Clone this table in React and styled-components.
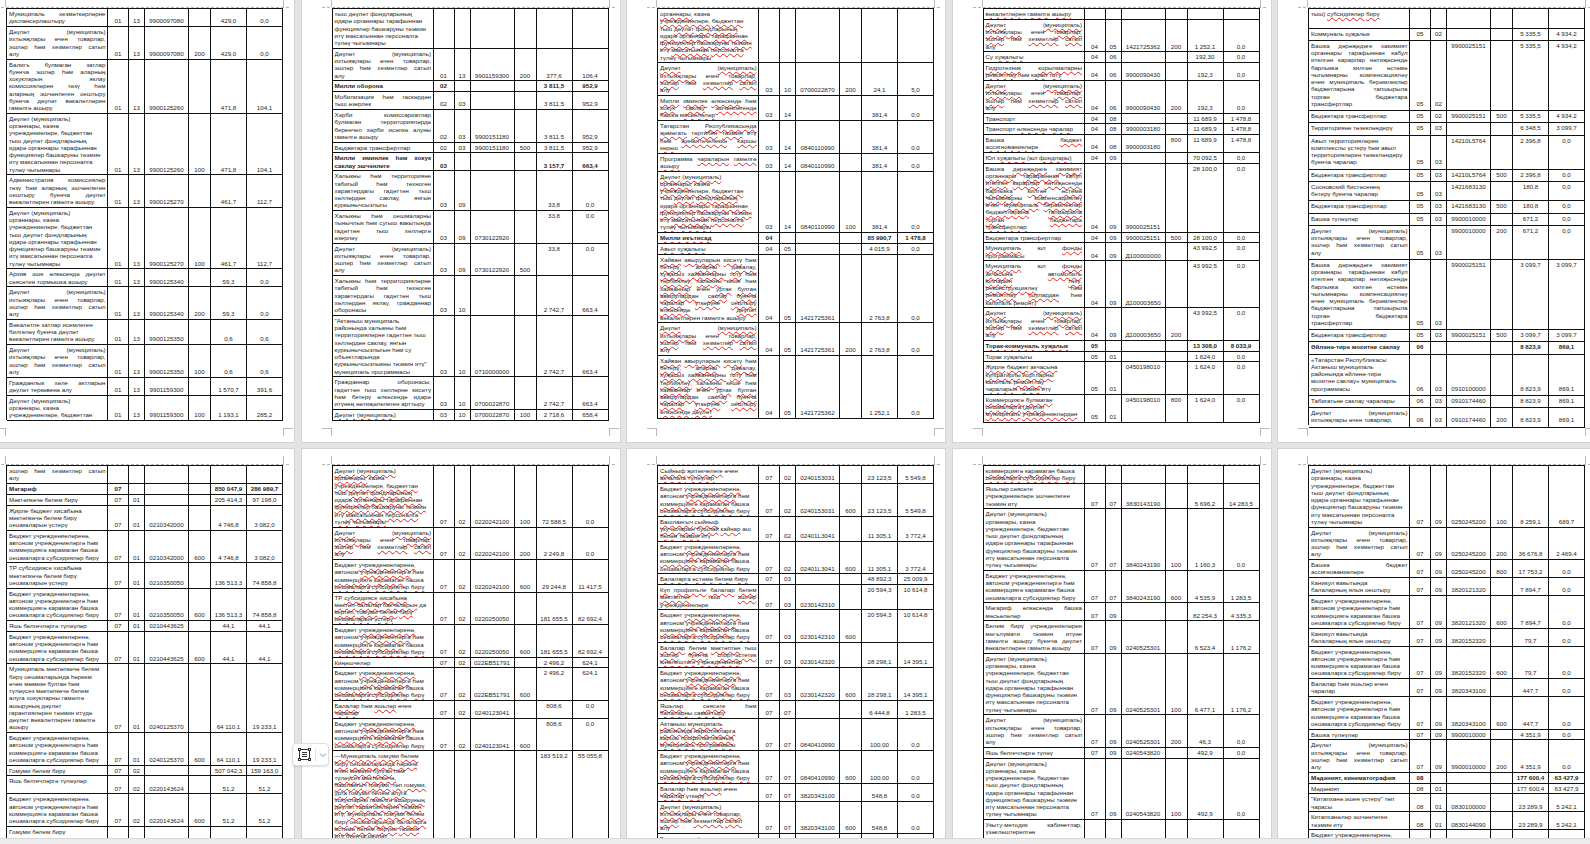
import React from 'react';
import styled, { createGlobalStyle } from 'styled-components';

const GlobalStyle = createGlobalStyle`
  html, body {
    margin: 0;
    padding: 0;
    overflow: hidden;
    background: #e4e4e4;
  }
  body {
    font-family: "Liberation Sans", Arial, sans-serif;
  }
`;

const Screen = styled.div`
  position: relative;
  width: 1590px;
  height: 844px;
  display: flex;
  flex-direction: column;
  overflow: hidden;
  background: #e4e4e4;
`;

const Viewport = styled.div`
  flex: 1;
  min-height: 0;
  overflow: hidden;
`;

const ScrollTrack = styled.div`
  flex: none;
  height: 5px;
  background: #ededed;
  border-top: 1px solid #d6d6d6;
`;

const Sheet = styled.div`
  display: grid;
  grid-template-columns: repeat(5, 318px);
  grid-auto-rows: 450px;
  column-gap: 7.5px;
  row-gap: 7px;
  width: max-content;
  margin: -8px 0 0 -24px;
`;

const Page = styled.div`
  box-sizing: border-box;
  background: #fff;
  box-shadow: 0 0 0 1px #d3d3d3;
  padding: 16px 0 0 30px;
`;

const Body = styled.div`
  position: relative;
  width: 277px;
  height: 420px;
`;

const HeaderRule = styled.div`
  position: absolute;
  left: -10px;
  right: -6px;
  top: -1px;
  border-top: 1px dashed #b5b5b5;
`;

const Corner = styled.span`
  position: absolute;
  width: 10px;
  height: 8px;
  box-sizing: border-box;
  ${({ $pos }) => {
    const c = '1px solid #b9b9b9';
    if ($pos === 'tl') return `top: -9px; left: -10px; border-right: ${c};`;
    if ($pos === 'tr') return `top: -9px; right: -10px; border-left: ${c};`;
    if ($pos === 'bl') return `top: 420px; left: -10px; border-top: ${c}; border-right: ${c};`;
    return `top: 420px; right: -10px; border-top: ${c}; border-left: ${c};`;
  }}
`;

const Table = styled.div`
  display: flex;
  flex-direction: column;
  box-sizing: border-box;
  width: 277px;
  height: ${p => (p.$h ? `${p.$h}px` : 'auto')};
  border-top: 1px solid #111;
  border-left: 1px solid #111;
  font-size: 6.2px;
  line-height: 7.25px;
  color: #1e1e1e;
`;

const Row = styled.div`
  display: grid;
  grid-template-columns: 101px 21px 16px 44px 22px 36px 36px;
  flex: ${p => (p.$fill ? '1 0 auto' : '0 0 auto')};
  font-weight: ${p => (p.$bold ? 700 : 400)};
`;

const DescCell = styled.div`
  box-sizing: border-box;
  min-width: 0;
  overflow: hidden;
  border-right: 1px solid #111;
  border-bottom: 1px solid #111;
  padding: 1px 1.5px ${p => 1.5 + p.$pad}px 2px;
`;

const Cell = styled.div`
  box-sizing: border-box;
  min-width: 0;
  overflow: hidden;
  white-space: nowrap;
  display: flex;
  justify-content: center;
  align-items: ${p => (p.$top ? 'flex-start' : 'flex-end')};
  border-right: 1px solid #111;
  border-bottom: 1px solid #111;
  padding: 1px 0 ${p => 1.5 + p.$pad}px;
`;

const Line = styled.div`
  height: 7.25px;
  white-space: nowrap;
  text-align: ${p => (p.$just ? 'justify' : 'left')};
  text-align-last: ${p => (p.$just ? 'justify' : 'auto')};
`;

const Squiggle = styled.span`
  text-decoration-line: underline;
  text-decoration-style: wavy;
  text-decoration-color: #e3241d;
  text-decoration-thickness: 1px;
  text-underline-offset: 1px;
  text-decoration-skip-ink: none;
`;

const PasteChip = styled.div`
  position: absolute;
  left: 292px;
  top: 743px;
  width: 37px;
  height: 23px;
  box-sizing: border-box;
  display: flex;
  align-items: center;
  gap: 3px;
  padding-left: 4px;
  background: #fff;
  border: 1px solid #dedede;
  border-radius: 4px;
  box-shadow: 0 1px 2px rgba(0, 0, 0, 0.12);
`;

const ChipDivider = styled.span`
  width: 1px;
  height: 13px;
  background: #e2e2e2;
`;

const A8 = 'Дәүләт (муниципаль)/органнары, казна/учреждениеләре, бюджеттан/тыш дәүләт фондларының/идарә органнары тарафыннан/функцияләр башкаруны тәэмин/итү максатыннан персоналга/түләү чыгымнары';
const B4 = 'Дәүләт (муниципаль)/ихтыяҗлары өчен товарлар,/эшләр һәм хезмәтләр сатып/алу';
const C4 = 'Бюджет учреждениеләренә,/автоном учреждениеләргә һәм/коммерциягә карамаган башка/оешмаларга субсидияләр бирү';
const TR = 'Бюджетара трансфертлар';
const OTHER9 = 'Башка дәрәҗәдәге хакимият/органнары тарафыннан кабул/ителгән карарлар нәтиҗәсендә/барлыкка килгән өстәмә/чыгымнарны компенсацияләү/өчен муниципаль берәмлекләр/бюджетларына тапшырыла/торган бюджетара/трансфертлар';
const ANIMAL = 'Хайван авыруларын кисәтү һәм/бетерү, аларны дәвалау,/хуҗасыз хайваннарны тоту һәм/тәрбияләү, халыкны кеше һәм/хайваннар өчен уртак булган/авырулардан саклау буенча/чаралар үткәрүне оештыру/өлкәсендә дәүләт';

// flags: b bold, j justified, s spell squiggle, t sums on top, k code on top, y type on top
const pages = [
  {
    h: 412,
    rows: [
      ['j', 'Муниципаль хезмәткәрләрне/диспансерлаштыру', '01', '13', '9900097080', '', '429,0', '0,0'],
      ['j', B4, '01', '13', '9900097080', '200', '429,0', '0,0'],
      ['j', 'Балигъ булмаган затлар/буенча эшләр һәм аларның/хокукларын яклау/комиссияләрен төзү һәм/аларның эшчәнлеген оештыру/буенча дәүләт вәкаләтләрен/гамәлгә ашыру', '01', '13', '9900125260', '', '471,8', '104,1'],
      ['', A8, '01', '13', '9900125260', '100', '471,8', '104,1'],
      ['j', 'Административ комиссияләр/төзү һәм аларның эшчәнлеген/оештыру буенча дәүләт/вәкаләтләрен гамәлгә ашыру', '01', '13', '9900125270', '', '461,7', '112,7'],
      ['', A8, '01', '13', '9900125270', '100', '461,7', '112,7'],
      ['j', 'Архив эше өлкәсендә дәүләт/сәясәтен тормышка ашыру', '01', '13', '9900125340', '', '59,3', '0,0'],
      ['j', B4, '01', '13', '9900125340', '200', '59,3', '0,0'],
      ['', 'Вәкаләтле затлар исемлеген/билгеләү буенча дәүләт/вәкаләтләрен гамәлгә ашыру', '01', '13', '9900125350', '', '0,6', '0,6'],
      ['j', B4, '01', '13', '9900125350', '100', '0,6', '0,6'],
      ['j', 'Гражданлык хәле актларын/дәүләт теркәвенә алу', '01', '13', '9901159300', '', '1 570,7', '391,6'],
      ['', 'Дәүләт (муниципаль)/органнары, казна/учреждениеләре, бюджеттан', '01', '13', '9901159300', '100', '1 193,1', '285,2'],
    ],
  },
  {
    h: 413,
    rows: [
      ['', 'тыш дәүләт фондларының/идарә органнары тарафыннан/функцияләр башкаруны тәэмин/итү максатыннан персоналга/түләү чыгымнары', '', '', '', '', '', ''],
      ['j', B4, '01', '13', '9901159300', '200', '377,6', '106,4'],
      ['b', 'Милли оборона', '02', '', '', '', '3 811,5', '952,9'],
      ['j', 'Мобилизация һәм гаскәрдән/тыш әзерлек', '02', '03', '', '', '3 811,5', '952,9'],
      ['j', 'Хәрби комиссариатлар/булмаган территорияләрдә/беренчел хәрби исәпкә алуны/гамәлгә ашыру', '02', '03', '9900151180', '', '3 811,5', '952,9'],
      ['', TR, '02', '03', '9900151180', '500', '3 811,5', '952,9'],
      ['bj', 'Милли иминлек һәм хокук/саклау эшчәнлеге', '03', '', '', '', '3 157,7', '663,4'],
      ['j', 'Халыкны һәм территорияне/табигый һәм техноген/характердагы гадәттән тыш/хәлләрдән саклау, янгын/куркынычсызлыгы', '03', '09', '', '', '33,8', '0,0'],
      ['jt', 'Халыкны һәм оешмаларны/тынычлык һәм сугыш вакытында/гадәттән тыш хәлләргә/әзерләү', '03', '09', '0730122920', '', '33,8', '0,0'],
      ['jt', B4, '03', '09', '0730122920', '500', '33,8', '0,0'],
      ['j', 'Халыкны һәм территорияләрне/табигый һәм техноген/характердагы гадәттән тыш/хәлләрдән яклау, гражданнар/оборонасы', '03', '10', '', '', '2 742,7', '663,4'],
      ['', '"Актаныш муниципаль/районында халыкны һәм/территорияләрне гадәттән тыш/хәлләрдән саклау, янгын/куркынычсызлыгын һәм су/объектларында/куркынычсызлыкны тәэмин итү"/муниципаль программасы', '03', '10', '0710000000', '', '2 742,7', '663,4'],
      ['j', 'Гражданнар оборонасы,/гадәттән тыш хәлләрне кисәтү/һәм бетерү өлкәсендә идарә/итүнең нәтиҗәлелеген арттыру', '03', '10', '0700022870', '', '2 742,7', '663,4'],
      ['s', 'Дәүләт (муниципаль)', '03', '10', '0700022870', '100', '2 718,6', '658,4'],
    ],
  },
  {
    h: 411,
    rows: [
      ['s', 'органнары, казна/учреждениеләре, бюджеттан/тыш дәүләт фондларының/идарә органнары тарафыннан/функцияләр башкаруны тәэмин/итү максатыннан персоналга/түләү чыгымнары', '', '', '', '', '', ''],
      ['js', B4, '03', '10', '0700022870', '200', '24,1', '5,0'],
      ['js', 'Милли иминлек өлкәсендә һәм/хокук саклау эшчәнлегендә/башка мәсьәләләр', '03', '14', '', '', '381,4', '0,0'],
      ['js', 'Татарстан Республикасында/җәмәгать тәртибен тәэмин итү/һәм җинаятьчелеккә каршы/көрәш', '03', '14', '0840110990', '', '381,4', '0,0'],
      ['js', 'Программа чараларын гамәлгә/ашыру', '03', '14', '0840110990', '', '381,4', '0,0'],
      ['s', A8, '03', '14', '0840110990', '100', '381,4', '0,0'],
      ['bs', 'Милли икътисад', '04', '', '', '', '85 990,7', '1 478,8'],
      ['s', 'Авыл хуҗалыгы', '04', '05', '', '', '4 015,9', '0,0'],
      ['js', ANIMAL + '/вәкаләтләрен гамәлгә ашыру', '04', '05', '1421725361', '', '2 763,8', '0,0'],
      ['js', B4, '04', '05', '1421725361', '200', '2 763,8', '0,0'],
      ['js', ANIMAL, '04', '05', '1421725362', '', '1 252,1', '0,0'],
    ],
  },
  {
    h: 415,
    rows: [
      ['s', 'вәкаләтләрен гамәлгә ашыру', '', '', '', '', '', ''],
      ['js', B4, '04', '05', '1421725362', '200', '1 252,1', '0,0'],
      ['s', 'Су хуҗалыгы', '04', '06', '', '', '192,30', '0,0'],
      ['js', 'Гидротехник корылмаларны/ремонтлау һәм карап тоту', '04', '06', '9900090430', '', '192,3', '0,0'],
      ['js', B4, '04', '06', '9900090430', '200', '192,3', '0,0'],
      ['', 'Транспорт', '04', '08', '', '', '11 689,9', '1 478,8'],
      ['s', 'Транспорт өлкәсендә чаралар', '04', '08', '9900003180', '', '11 689,9', '1 478,8'],
      ['jsyt', 'Башка бюджет/ассигнованиеләре', '04', '08', '9900003180', '800', '11 689,9', '1 478,8'],
      ['s', 'Юл хуҗалыгы (юл фондлары)', '04', '09', '', '', '70 092,5', '0,0'],
      ['jst', OTHER9, '04', '09', '9900025151', '', '28 100,0', '0,0'],
      ['s', TR, '04', '09', '9900025151', '500', '28 100,0', '0,0'],
      ['jst', 'Муниципаль юл фонды/программасы', '04', '09', 'Д100000000', '', '43 992,5', '0,0'],
      ['jst', 'Муниципаль юл фонды/акчасына автомобиль/юлларын төзү,/реконструкцияләү һәм/ремонтлау (шулардан һәм/капиталь ремонт)', '04', '09', 'Д100003650', '', '43 992,5', '0,0'],
      ['jst', B4, '04', '09', 'Д100003650', '200', '43 992,5', '0,0'],
      ['bs', 'Торак-коммуналь хуҗалык', '05', '', '', '', '13 308,0', '8 033,9'],
      ['s', 'Торак хуҗалыгы', '05', '01', '', '', '1 624,0', '0,0'],
      ['skt', 'Җирле бюджет акчасына/күпфатирлы йортларны/капиталь ремонтлау/чараларын тәэмин итү', '05', '01', '0450198010', '', '1 624,0', '0,0'],
      ['skyt', 'Коммерциягә булмаган/оешмаларга (дәүләт/муниципаль учреждениеләрдән', '05', '01', '0450198010', '800', '1 624,0', '0,0'],
    ],
  },
  {
    h: 417,
    pad: 1.5,
    rows: [
      ['s', 'тыш) субсидияләр бирү/', '', '', '', '', '', ''],
      ['t', 'Коммуналь хуҗалык', '05', '02', '', '', '5 335,5', '4 934,2'],
      ['jkt', OTHER9, '05', '02', '9900025151', '', '5 335,5', '4 934,2'],
      ['kyt', TR, '05', '02', '9900025151', '500', '5 335,5', '4 934,2'],
      ['t', 'Территорияне төзекләндерү', '05', '03', '', '', '6 348,5', '3 099,7'],
      ['kt', 'Авыл территорияләрен/комплекслы үстерү һәм авыл/территорияләрен төзекләндерү/буенча чаралар', '05', '03', '14210L5764', '', '2 396,8', '0,0'],
      ['kyt', TR, '05', '03', '14210L5764', '500', '2 396,8', '0,0'],
      ['kt', 'Сосновский бистәсенең/бетерү буенча чаралар', '05', '03', '1421683130', '', '180,8', '0,0'],
      ['kyt', TR, '05', '03', '1421683130', '500', '180,8', '0,0'],
      ['kyt', 'Башка түләүләр', '05', '03', '9900010000', '', '671,2', '0,0'],
      ['jkyt', B4, '05', '03', '9900010000', '200', '671,2', '0,0'],
      ['jkt', OTHER9, '05', '03', '9900025151', '', '3 099,7', '3 099,7'],
      ['kyt', TR, '05', '03', '9900025151', '500', '3 099,7', '3 099,7'],
      ['b', 'Әйләнә-тирә мохитне саклау', '06', '', '', '', '8 823,9', '869,1'],
      ['', '«Татарстан Республикасы/Актаныш муниципаль/районында әйләнә-тирә/мохитне саклау» муниципаль/программасы', '06', '03', '0910100000', '', '8 823,9', '869,1'],
      ['', 'Табигатьне саклау чаралары', '06', '03', '0910174460', '', '8 823,9', '869,1'],
      ['j', 'Дәүләт (муниципаль)/ихтыяҗлары өчен товарлар,', '06', '03', '0910174460', '200', '8 823,9', '869,1'],
    ],
  },
  {
    rows: [
      ['j', 'эшләр һәм хезмәтләр сатып/алу', '', '', '', '', '', ''],
      ['b', 'Мәгариф', '07', '', '', '', '850 047,9', '286 989,7'],
      ['', 'Мәктәпкәчә белем бирү', '07', '01', '', '', '205 414,3', '97 198,0'],
      ['', 'Җирле бюджет хисабына/мәктәпкәчә белем бирү/оешмаларын үстерү', '07', '01', '0210342000', '', '4 746,8', '3 082,0'],
      ['', C4, '07', '01', '0210342000', '600', '4 746,8', '3 082,0'],
      ['', 'ТР субсидиясе хисабына/мәктәпкәчә белем бирү/оешмаларын үстерү', '07', '01', '0210350050', '', '136 513,3', '74 858,8'],
      ['', C4, '07', '01', '0210350050', '600', '136 513,3', '74 858,8'],
      ['', 'Яшь белгечләргә түләүләр', '07', '01', '0210443625', '', '44,1', '44,1'],
      ['', C4, '07', '01', '0210443625', '600', '44,1', '44,1'],
      ['', 'Муниципаль мәктәпкәчә белем/бирү оешмаларында һәркем/өчен мөмкин булган һәм/түләүсез мәктәпкәчә белем/алуга хокукларны гамәлгә/ашыруның дәүләт/гарантияләрен тәэмин итүдә/дәүләт вәкаләтләрен гамәлгә/ашыру', '07', '01', '0240125370', '', '64 110,1', '19 233,1'],
      ['', C4, '07', '01', '0240125370', '600', '64 110,1', '19 233,1'],
      ['', 'Гомуми белем бирү', '07', '02', '', '', '507 042,3', '159 163,0'],
      ['', 'Яшь белгечләргә түләүләр/', '07', '02', '0220143624', '', '51,2', '51,2'],
      ['', C4, '07', '02', '0220143624', '600', '51,2', '51,2'],
      ['', 'Гомуми белем бирү/оешмаларын, шул исәптән/мәктәп-балалар бакчаларын/үстерү', '07', '02', '0220242100', '', '283 744,2', '76 366,5'],
    ],
  },
  {
    rows: [
      ['s', A8, '07', '02', '0220242100', '100', '72 588,5', '0,0'],
      ['js', B4, '07', '02', '0220242100', '200', '2 249,8', '0,0'],
      ['s', C4, '07', '02', '0220242100', '600', '29 244,8', '11 417,5'],
      ['s', 'ТР субсидиясе хисабына/мәктәп-балалар бакчаларын да/кертеп, гомуми белем бирү/оешмаларын үстерү', '07', '02', '0220250050', '', '181 655,5', '82 692,4'],
      ['s', C4, '07', '02', '0220250050', '600', '181 655,5', '82 692,4'],
      ['s', 'Киңәшчеләр', '07', '02', '022EB51791', '', '2 496,2', '624,1'],
      ['st', C4, '07', '02', '022EB51791', '600', '2 496,2', '624,1'],
      ['st', 'Балалар һәм яшьләр өчен/чаралар', '07', '02', '0240123041', '', '808,6', '0,0'],
      ['st', C4, '07', '02', '0240123041', '600', '808,6', '0,0'],
      ['st', '—Муниципаль гомуми белем/бирү оешмаларында һәркем/өчен мөмкин булган һәм/түләүсез мәктәпкәчә,/башлангыч гомуми, төп гомуми,/урта гомуми белем алуга/хокукларны гамәлгә ашыруның/дәүләт гарантияләрен тәэмин/итү, муниципаль гомуми белем/бирү оешмаларында балаларга/өстәмә белем бирүне тәэмин/итү буенча дәүләт/вәкаләтләрен гамәлгә ашыру/', '07', '02', '0240125300', '', '183 519,2', '55 055,8'],
    ],
  },
  {
    rows: [
      ['s', 'Сыйныф җитәкчелеге өчен/акчалата түләүләр', '07', '02', '0240153031', '', '23 123,5', '5 549,8'],
      ['s', C4, '07', '02', '0240153031', '600', '23 123,5', '5 549,8'],
      ['s', 'Башлангыч сыйныф/укучыларын бушлай кайнар аш/белән тәэмин итү', '07', '02', '02401L3041', '', '11 305,1', '3 772,4'],
      ['s', C4, '07', '02', '02401L3041', '600', '11 305,1', '3 772,4'],
      ['s', 'Балаларга өстәмә белем бирү', '07', '03', '', '', '48 892,3', '25 009,9'],
      ['jst', 'Күп профильле балалар белем/мәктәптән тыш эшләр/учреждениеләре', '07', '03', '0230142310', '', '20 594,3', '10 614,8'],
      ['st', C4, '07', '03', '0230142310', '600', '20 594,3', '10 614,8'],
      ['js', 'Балалар белем мәктәптән тыш/эшләр буенча спорт-эстетик/юнәлештәге учреждениеләр', '07', '03', '0230142320', '', '28 298,1', '14 395,1'],
      ['s', C4, '07', '03', '0230142320', '600', '28 298,1', '14 395,1'],
      ['js', 'Яшьләр сәясәте һәм/балаларны савыктыру', '07', '07', '', '', '6 444,8', '1 283,5'],
      ['s', 'Актаныш муниципаль/районында наркотикларга/каршы профилактиканың/муниципаль программасы', '07', '07', '0840410990', '', '100,00', '0,0'],
      ['s', C4, '07', '07', '0840410990', '600', '100,00', '0,0'],
      ['s', 'Балалар һәм яшьләр өчен/чаралар үткәрү', '07', '07', '3820343100', '', '548,8', '0,0'],
      ['s', B4, '07', '07', '3820343100', '600', '548,8', '0,0'],
      ['s', 'Балаларның һәм яшьләрнең/ялын оештыру/чаралары', '07', '07', '3820121320', '', '5 146,8', '0,0'],
    ],
  },
  {
    rows: [
      ['s', 'коммерциягә карамаган башка/оешмаларга субсидияләр бирү', '', '', '', '', '', ''],
      ['', 'Яшьләр сәясәте/учреждениеләре эшчәнлеген/тәэмин итү', '07', '07', '3830143190', '', '5 696,2', '14 283,5'],
      ['', A8, '07', '07', '3840243190', '100', '1 160,3', '0,0'],
      ['', C4, '07', '07', '3840243190', '600', '4 535,9', '1 283,5'],
      ['j', 'Мәгариф өлкәсендә башка/мәсьәләләр', '07', '09', '', '', '82 254,3', '4 335,3'],
      ['j', 'Белем бирү учреждениеләрен/мәгълүмати тәэмин итүне/гамәлгә ашыру буенча дәүләт/вәкаләтләрен гамәлгә ашыру', '07', '09', '0240525301', '', '6 523,4', '1 176,2'],
      ['', A8, '07', '09', '0240525301', '100', '6 477,1', '1 176,2'],
      ['j', B4, '07', '09', '0240525301', '200', '46,3', '0,0'],
      ['', 'Яшь белгечләргә түләү', '07', '09', '0240543820', '', '492,9', '0,0'],
      ['', A8, '07', '09', '0240543820', '100', '492,9', '0,0'],
      ['j', 'Укыту-методик кабинетлар,/үзәкләштерелгән/бухгалтерияләр эшчәнлеген/тәэмин итү', '07', '09', '0250245200', '', '62 689,1', '3 159,1'],
    ],
  },
  {
    rows: [
      ['', A8, '07', '09', '0250245200', '100', '8 259,1', '689,7'],
      ['j', B4, '07', '09', '0250245200', '200', '36 676,8', '2 469,4'],
      ['j', 'Башка бюджет/ассигнованиеләре', '07', '09', '0250245200', '800', '17 753,2', '0,0'],
      ['', 'Каникул вакытында/балаларның ялын оештыру', '07', '09', '3820121320', '', '7 894,7', '0,0'],
      ['', C4, '07', '09', '3820121320', '600', '7 894,7', '0,0'],
      ['', 'Каникул вакытында/балаларның ялын оештыру', '07', '09', '3820152320', '', '79,7', '0,0'],
      ['', C4, '07', '09', '3820152320', '600', '79,7', '0,0'],
      ['', 'Балалар һәм яшьләр өчен/чаралар', '07', '09', '3820343100', '', '447,7', '0,0'],
      ['', C4, '07', '09', '3820343100', '600', '447,7', '0,0'],
      ['', 'Башка түләүләр', '07', '09', '9900010000', '', '4 351,9', '0,0'],
      ['j', B4, '07', '09', '9900010000', '200', '4 351,9', '0,0'],
      ['b', 'Мәдәният, кинематография', '08', '', '', '', '177 600,4', '63 427,9'],
      ['', 'Мәдәният', '08', '01', '', '', '177 600,4', '63 427,9'],
      ['', '"Китапханә эшен үстерү" төп/чарасы', '08', '01', '0830100000', '', '23 289,9', '5 242,1'],
      ['', 'Китапханәләр эшчәнлеген/тәэмин итү', '08', '01', '0830144090', '', '23 289,9', '5 242,1'],
      ['', C4, '08', '01', '0830144090', '600', '23 289,9', '5 242,1'],
    ],
  },
];

const PLAIN = new Set(['казна', 'өчен', 'һәм', 'тыш', 'итү', 'алу', 'Бюджет', 'автоном', 'башка', 'Башка', 'Транспорт', 'Программа', 'Татарстан', 'кеше', 'да', 'аш', 'капиталь', 'кабул']);

const marked = line =>
  line.split(' ').flatMap((w, i) => {
    const bare = w.replace(/[(),.«»"—]/g, '');
    const word = PLAIN.has(bare) || bare.length < 3 ? w : <Squiggle key={i}>{w}</Squiggle>;
    return i ? [' ', word] : [word];
  });

const Desc = ({ text, just, spell }) => {
  const lines = text.split('/');
  return lines.map((l, i) => (
    <Line key={i} $just={just && i < lines.length - 1}>
      {l ? (spell ? marked(l) : l) : '\u00a0'}
    </Line>
  ));
};

const Entry = ({ row, pad, fill }) => {
  const [flags, text, c1, c2, code, type, a1, a2] = row;
  const has = f => flags.includes(f);
  return (
    <Row $bold={has('b')} $fill={fill}>
      <DescCell $pad={pad}>
        <Desc text={text} just={has('j')} spell={has('s')} />
      </DescCell>
      <Cell $pad={pad}>{c1}</Cell>
      <Cell $pad={pad}>{c2}</Cell>
      <Cell $pad={pad} $top={has('k')}>{code}</Cell>
      <Cell $pad={pad} $top={has('y')}>{type}</Cell>
      <Cell $pad={pad} $top={has('t')}>{a1}</Cell>
      <Cell $pad={pad} $top={has('t')}>{a2}</Cell>
    </Row>
  );
};

const DocPage = ({ page }) => (
  <Page>
    <Body>
      <HeaderRule />
      <Corner $pos="tl" />
      <Corner $pos="tr" />
      <Corner $pos="bl" />
      <Corner $pos="br" />
      <Table $h={page.h}>
        {page.rows.map((row, i) => (
          <Entry
            key={i}
            row={row}
            pad={page.pad || 0}
            fill={!!page.h && i === page.rows.length - 1}
          />
        ))}
      </Table>
    </Body>
  </Page>
);

const PasteIcon = () => (
  <svg width="15" height="15" viewBox="0 0 15 15" fill="none" stroke="#333" strokeWidth="1">
    <rect x="2.5" y="2.5" width="10" height="10" />
    <rect x="1.5" y="1.5" width="2" height="2" fill="#fff" />
    <rect x="11.5" y="1.5" width="2" height="2" fill="#fff" />
    <rect x="1.5" y="11.5" width="2" height="2" fill="#fff" />
    <rect x="11.5" y="11.5" width="2" height="2" fill="#fff" />
    <path d="M5 5.5h5M5 7.5h5M5 9.5h5" />
  </svg>
);

const Chevron = () => (
  <svg width="8" height="6" viewBox="0 0 8 6" fill="none" stroke="#888" strokeWidth="1">
    <path d="M1 1.5l3 3 3-3" />
  </svg>
);

export default function App() {
  return (
    <Screen>
      <GlobalStyle />
      <Viewport>
        <Sheet>
          {pages.map((p, i) => (
            <DocPage key={i} page={p} />
          ))}
        </Sheet>
      </Viewport>
      <ScrollTrack />
      <PasteChip>
        <PasteIcon />
        <ChipDivider />
        <Chevron />
      </PasteChip>
    </Screen>
  );
}
